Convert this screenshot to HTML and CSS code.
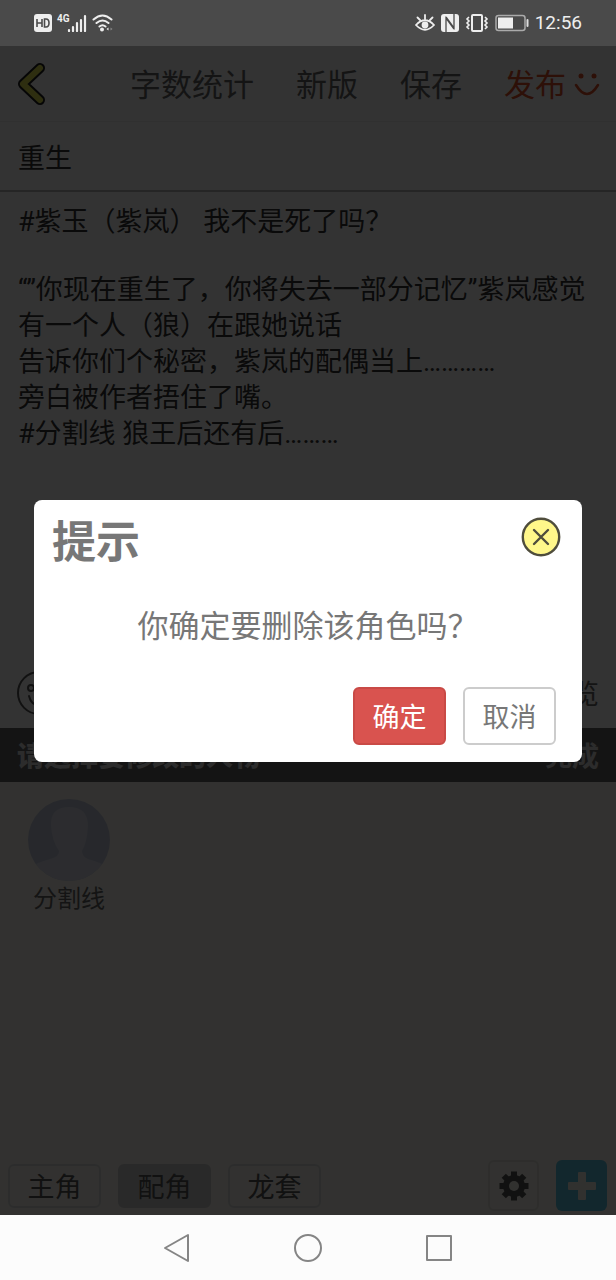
FILE: index.html
```
<!DOCTYPE html>
<html lang="zh-CN">
<head>
    <meta charset="UTF-8">
    <meta name="viewport" content="width=device-width, initial-scale=1.0">
    <title>编辑</title>
    <link rel="stylesheet" href="styles.css">
</head>
<body>
    <div class="status-bar">
        <div class="status-group">
            <svg width="18" height="18" viewBox="0 0 18 18">
                <rect width="18" height="18" rx="3" fill="#eee"/>
                <path d="M3 5v8M8 5v8M3 9h5M10.500 5v8h1.500q3 0 3-4t-3-4z" fill="none" stroke="#4a4a4a" stroke-width="1.600"/>
            </svg>
            <span class="network">4G</span>
            <svg class="signal" width="20" height="18" viewBox="0 0 20 18" stroke="#eee" stroke-width="2.200" stroke-linecap="round">
                <path d="M2 16v1M6 13v4M10 9v8M14 6v11M18 2v15"/>
            </svg>
            <svg width="22" height="18" viewBox="0 0 22 18" fill="none" stroke="#eee" stroke-width="2" stroke-linecap="round">
                <path d="M1.500 5.500q9-8 18 0M4.500 9q6-5 12 0M7.500 12.500q3-2.500 6 0"/>
                <circle cx="10" cy="15.500" r="1" fill="#eee"/>
                <path d="M16.500 13.500v3l-2-1.500z" fill="#eee" stroke="none"/>
                <path d="M18.500 13.500v3l2-1.500z" fill="#888" stroke="none"/>
            </svg>
        </div>
        <div class="status-group status-right">
            <svg width="20" height="18" viewBox="0 0 20 18" fill="none" stroke="#eee" stroke-width="1.800" stroke-linecap="round">
                <path d="M1 11q9-9.500 18 0-9 9.500-18 0zM10 5V1M5 6L2.500 3.500M15 6l2.500-2.500"/>
                <circle cx="10" cy="11" r="2.500" fill="#eee"/>
            </svg>
            <svg width="18" height="18" viewBox="0 0 18 18">
                <rect width="18" height="18" rx="3" fill="#eee"/>
                <path d="M5 18V4l8 11M13 0v14L5 3" fill="none" stroke="#4a4a4a" stroke-width="1.300"/>
            </svg>
            <svg width="24" height="18" viewBox="0 0 24 18" fill="none" stroke="#eee">
                <rect x="7" y="1" width="10" height="16" rx="1" stroke-width="2"/>
                <path d="M4 3l-2 2 2 2-2 2 2 2-2 2 2 2M20 3l2 2-2 2 2 2-2 2 2 2-2 2" stroke-width="1.600"/>
            </svg>
            <svg width="34" height="18" viewBox="0 0 34 18">
                <rect x="1" y="1.500" width="29" height="15" rx="2.500" fill="none" stroke="#aaa" stroke-width="1.500"/>
                <rect x="3" y="3.500" width="15" height="11" fill="#eee"/>
                <rect x="31.500" y="5" width="2" height="8" rx="1" fill="#ddd"/>
            </svg>
            <time class="clock">12:56</time>
        </div>
    </div>

    <div class="app">
        <header class="top-bar">
            <button class="icon-btn back-btn" aria-label="返回">
                <svg width="30" height="46" viewBox="0 0 30 46" fill="none" stroke-linecap="round" stroke-linejoin="round">
                    <path d="M24 7L7 23l17 16" stroke="#222" stroke-width="10"/>
                    <path d="M24 7L7 23l17 16" stroke="#e6e650" stroke-width="6"/>
                </svg>
            </button>
            <nav class="top-links">
                <a href="#">字数统计</a>
                <a href="#">新版</a>
                <a href="#">保存</a>
                <a href="#" class="publish">发布
                    <svg width="26" height="26" viewBox="0 0 26 26">
                        <circle cx="7" cy="3" r="2.500" fill="currentColor"/>
                        <circle cx="20" cy="3" r="2.500" fill="currentColor"/>
                        <path d="M2 12q11 18 22 0" fill="none" stroke="currentColor" stroke-width="2.600" stroke-linecap="round"/>
                    </svg>
                </a>
            </nav>
        </header>

        <input class="title-input" type="text" value="重生" aria-label="标题">

        <main class="content" contenteditable="true" role="textbox" aria-multiline="true" aria-label="正文" spellcheck="false">
            <p>#紫玉（紫岚） 我不是死了吗？</p>
            <p class="blank"><br></p>
            <p>“”你现在重生了，你将失去一部分记忆”紫岚感觉有一个人（狼）在跟她说话</p>
            <p>告诉你们个秘密，紫岚的配偶当上…………</p>
            <p>旁白被作者捂住了嘴。</p>
            <p>#分割线 狼王后还有后………</p>
        </main>

        <div class="tool-bar">
            <button class="icon-btn" aria-label="表情">
                <svg width="44" height="44" viewBox="0 0 44 44" fill="none" stroke="#555" stroke-width="2">
                    <circle cx="22" cy="22" r="21"/>
                    <circle cx="14" cy="17" r="3"/>
                    <circle cx="30" cy="17" r="3"/>
                    <path d="M12 25q2 9 10 9t10-9" stroke-linecap="round"/>
                </svg>
            </button>
            <a href="#" class="preview">预览</a>
        </div>

        <div class="panel-head">
            <strong>请选择要修改的人物</strong>
            <button class="done-btn">完成</button>
        </div>

        <section class="panel">
            <div class="roles">
                <button class="role">
                    <svg width="82" height="82" viewBox="0 0 82 82">
                        <defs>
                            <clipPath id="avatar"><circle cx="41" cy="41" r="41"/></clipPath>
                        </defs>
                        <g clip-path="url(#avatar)">
                            <rect width="82" height="82" fill="#c2c8dc"/>
                            <path d="M0 69q8-5 22-9 10-3 9-8-7-10-8-25Q22 8 41 8t19 19q-1 17-6 25 0 5 6 8 14 4 22 9v13H0z" fill="#dadde9"/>
                        </g>
                    </svg>
                    <span>分割线</span>
                </button>
            </div>

            <div class="panel-foot">
                <button class="tab">主角</button>
                <button class="tab active">配角</button>
                <button class="tab">龙套</button>
                <button class="square gear" aria-label="设置">
                    <svg width="30" height="30" viewBox="-15 -15 30 30" fill="#555">
                        <path d="M-3-14.500H3V14.500H-3z"/>
                        <path d="M-3-14.500H3V14.500H-3z" transform="rotate(45)"/>
                        <path d="M-3-14.500H3V14.500H-3z" transform="rotate(90)"/>
                        <path d="M-3-14.500H3V14.500H-3z" transform="rotate(135)"/>
                        <circle r="11"/>
                        <circle r="5" fill="#f5f3ec"/>
                    </svg>
                </button>
                <button class="square add" aria-label="添加">
                    <svg width="28" height="28" viewBox="0 0 28 28" fill="#f5f3ec">
                        <rect x="10" width="8" height="28" rx="1"/>
                        <rect y="10" width="28" height="8" rx="1"/>
                    </svg>
                </button>
            </div>
        </section>

        <div class="overlay">
            <div class="modal" role="dialog" aria-modal="true" aria-labelledby="modalTitle">
                <div class="modal-head">
                    <h2 id="modalTitle">提示</h2>
                    <button class="icon-btn" aria-label="关闭">
                        <svg width="40" height="40" viewBox="0 0 40 40" stroke="#4f4d3c" stroke-width="2.400" stroke-linecap="round">
                            <circle cx="20" cy="20" r="18.200" fill="#fff78a"/>
                            <path d="M13 13l14 14M27 13L13 27"/>
                        </svg>
                    </button>
                </div>
                <p class="modal-text">你确定要删除该角色吗？</p>
                <div class="modal-actions">
                    <button class="btn btn-danger">确定</button>
                    <button class="btn">取消</button>
                </div>
            </div>
        </div>
    </div>

    <div class="nav-bar">
        <button class="icon-btn" aria-label="返回">
            <svg width="30" height="30" viewBox="0 0 30 30" fill="none" stroke="#858585" stroke-width="2" stroke-linejoin="round">
                <path d="M26 2v26L3 15z"/>
            </svg>
        </button>
        <button class="icon-btn" aria-label="主屏幕">
            <svg width="30" height="30" viewBox="0 0 30 30" fill="none" stroke="#858585" stroke-width="2">
                <circle cx="15" cy="15" r="13"/>
            </svg>
        </button>
        <button class="icon-btn" aria-label="最近任务">
            <svg width="30" height="30" viewBox="0 0 30 30" fill="none" stroke="#858585" stroke-width="2" stroke-linejoin="round">
                <rect x="3" y="3" width="24" height="24"/>
            </svg>
        </button>
    </div>
</body>
</html>
```
FILE: styles.css
```
* {
    box-sizing: border-box;
    margin: 0;
    padding: 0;
}

body {
    display: flex;
    flex-direction: column;
    min-height: 100vh;
    font-family: Roboto, "Noto Sans CJK SC", sans-serif;
    font-size: 27px;
    line-height: 36px;
    color: #333;
}

button,
input {
    font: inherit;
    color: inherit;
    background: none;
    border: none;
}

button {
    cursor: pointer;
}

a {
    color: inherit;
    text-decoration: none;
}

svg {
    display: block;
    flex-shrink: 0;
}

.icon-btn {
    display: flex;
}

/* Status bar */
.status-bar {
    display: flex;
    justify-content: space-between;
    align-items: center;
    height: 46px;
    padding: 0 34px;
    background-color: #4a4a4a;
    color: #eee;
}

.status-group {
    display: flex;
    align-items: center;
    gap: 5px;
}

.status-right {
    gap: 6px;
}

.network {
    align-self: flex-start;
    font-size: 10px;
    font-weight: 700;
    line-height: 10px;
}

.signal {
    margin-left: -8px;
}

.clock {
    font-size: 19px;
}

/* Editor */
.app {
    position: relative;
    flex: 1;
    display: flex;
    flex-direction: column;
    background-color: #fff;
}

.top-bar {
    display: flex;
    justify-content: space-between;
    align-items: center;
    height: 76px;
    padding: 0 16px;
    border-bottom: 1px solid #eee;
}

.top-links {
    display: flex;
    gap: 42px;
    padding-top: 4px;
    font-size: 31px;
    color: #666;
}

.publish {
    display: flex;
    align-items: center;
    gap: 8px;
    color: #e05028;
}

.title-input {
    width: 100%;
    height: 70px;
    padding: 0 18px;
    border-bottom: 2px solid #bbb;
    outline: none;
}

.content {
    flex: 1;
    padding: 12px 18px;
    outline: none;
}

.content .blank {
    line-height: 32px;
}

.tool-bar {
    display: flex;
    justify-content: space-between;
    align-items: center;
    height: 70px;
    padding: 0 17px;
}

.preview {
    padding-top: 4px;
    color: #666;
}

.panel-head {
    display: flex;
    justify-content: space-between;
    align-items: center;
    height: 54px;
    padding: 4px 17px 0;
    background-color: #666;
    color: #ddd;
    font-weight: 700;
}

.panel {
    display: flex;
    flex-direction: column;
    justify-content: space-between;
    height: 433px;
    padding: 17px 9px 4px 8px;
    background-color: #f8f6ee;
}

.roles {
    display: flex;
    padding: 0 20px;
}

.role {
    display: flex;
    flex-direction: column;
    align-items: center;
    font-size: 24px;
    color: #666;
}

.panel-foot {
    display: flex;
    align-items: center;
    gap: 17px;
}

.tab {
    width: 93px;
    height: 44px;
    padding-top: 4px;
    border: 2px solid #ddd;
    border-radius: 6px;
    color: #555;
}

.tab.active {
    background-color: #ccc;
    border-color: #ccc;
}

.square {
    display: flex;
    justify-content: center;
    align-items: center;
    width: 51px;
    height: 51px;
    border-radius: 6px;
}

.gear {
    margin-left: auto;
    border: 2px solid #e4e2da;
}

.add {
    background-color: #5bc0de;
}

/* Dialog */
.overlay {
    position: absolute;
    inset: 0;
    display: flex;
    align-items: center;
    padding: 0 34px;
    background-color: rgba(0, 0, 0, 0.8);
}

.modal {
    width: 100%;
    padding: 17px 18px;
    border-radius: 8px;
    background-color: #fff;
    color: #777;
}

.modal-head {
    display: flex;
    justify-content: space-between;
    align-items: flex-start;
    padding-right: 3px;
}

.modal-head h2 {
    padding-top: 2px;
    font-size: 44px;
    line-height: 48px;
}

.modal-text {
    padding: 42px 0;
    font-size: 31px;
    text-align: center;
}

.modal-actions {
    display: flex;
    justify-content: flex-end;
    gap: 17px;
    padding: 0 8px;
}

.btn {
    width: 93px;
    height: 58px;
    padding-top: 4px;
    border: 2px solid #ccc;
    border-radius: 6px;
    background-color: #fff;
}

.btn-danger {
    background-color: #d9534f;
    border-color: #c94a46;
    color: #fff;
}

/* System navigation */
.nav-bar {
    display: flex;
    justify-content: center;
    align-items: center;
    gap: 101px;
    height: 65px;
    background-color: #fcfcfc;
}
```
